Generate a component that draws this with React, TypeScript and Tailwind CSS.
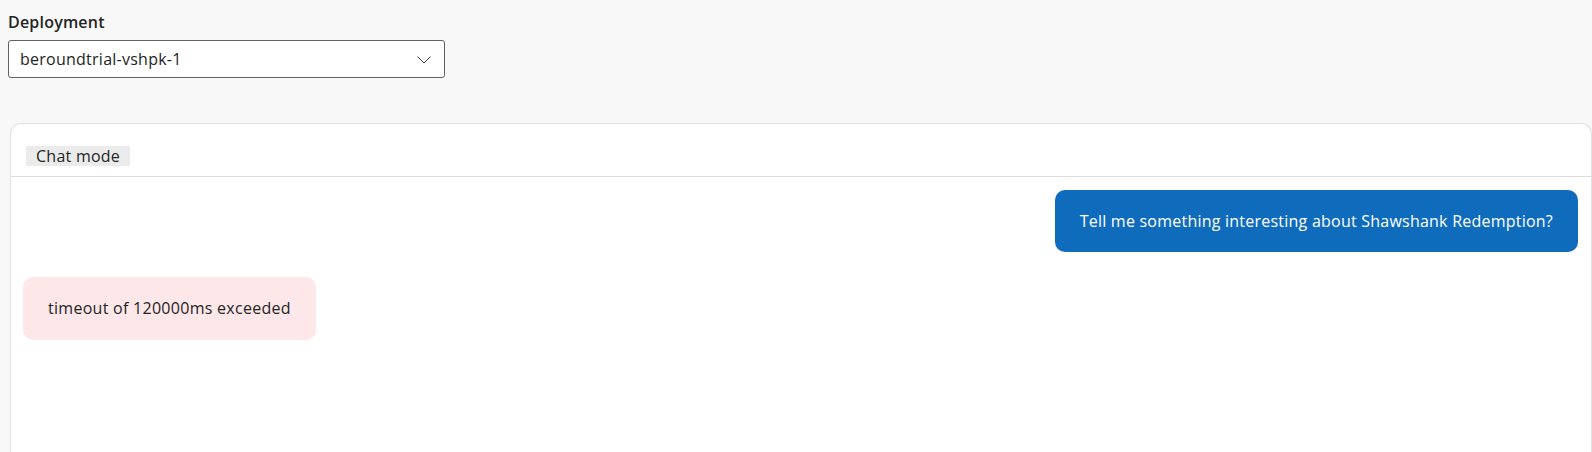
const messages = [
  { id: 1, role: 'user', text: 'Tell me something interesting about Shawshank Redemption?' },
  { id: 2, role: 'error', text: 'timeout of 120000ms exceeded' }
];

export default function App() {
  return (
    <div className="min-h-[452px] bg-[#f8f8f8] pl-2 pt-2 font-['Open_Sans',sans-serif] text-[#242424]">
      <label className="block pt-[3px] text-[16px] font-semibold leading-[22px] tracking-[0.2px]">
        Deployment
      </label>
      <div className="mt-[7px] flex h-[38px] w-[437px] items-center justify-between rounded-[3px] border border-[#616161] bg-white pl-[11px] pr-[12px]">
        <span className="text-[16px] tracking-[0.25px]">beroundtrial-vshpk-1</span>
        <svg width="16" height="10" viewBox="0 0 16 10" fill="none" className="mt-[2px]">
          <path d="M1.5 1.5 L8 8 L14.5 1.5" stroke="#424242" strokeWidth="1" />
        </svg>
      </div>

      <div className="ml-[2px] mt-[45px] h-[330px] rounded-t-[11px] border border-b-0 border-[#e1e1e1] bg-white">
        <div className="h-[53px] border-b border-[#dcdcdc] pl-[15px] pt-[20px]">
          <span className="inline-block h-5 bg-[#ebebeb] px-[10px] text-[16px] leading-5 tracking-[0.25px]">
            Chat mode
          </span>
        </div>
        <div className="flex flex-col gap-[25px] pl-[12px] pr-[13px] pt-[13px]">
          {messages.map((m) =>
            m.role === 'user' ? (
              <div key={m.id} className="flex justify-end">
                <div className="rounded-[10px] bg-[#0f6cbd] px-[25px] py-5 text-[16px] leading-[22px] tracking-[0.23px] text-white">
                  {m.text}
                </div>
              </div>
            ) : (
              <div key={m.id} className="flex justify-start">
                <div className="rounded-[10px] bg-[#fde7e9] px-[25px] py-5 text-[16px] leading-[23px] tracking-[0.28px]">
                  {m.text}
                </div>
              </div>
            )
          )}
        </div>
      </div>
    </div>
  );
}
